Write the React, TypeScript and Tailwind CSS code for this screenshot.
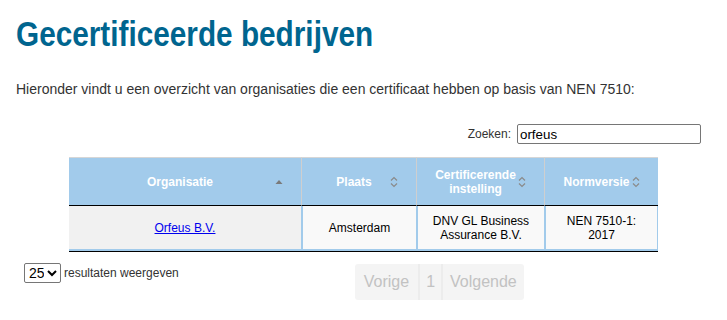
import React from 'react';

const SortBoth = () => (
  <svg width="8" height="12" viewBox="0 0 8 12">
    <path d="M1 4.5 L4 1.5 L7 4.5" fill="none" stroke="#8a8a8a" strokeWidth="1.2" />
    <path d="M1 7.5 L4 10.5 L7 7.5" fill="none" stroke="#8a8a8a" strokeWidth="1.2" />
  </svg>
);

const SortAsc = () => (
  <svg width="8" height="12" viewBox="0 0 8 12">
    <path d="M0.5 8 L4 4 L7.5 8 Z" fill="#7a7a7a" />
  </svg>
);

const columns = [
  { label: 'Organisatie', w: 'w-[232px]', sorted: true },
  { label: 'Plaats', w: 'w-[115px]', sorted: false },
  { label: 'Certificerende instelling', w: 'w-[128px]', sorted: false },
  { label: 'Normversie', w: 'w-[114px]', sorted: false },
];

export default function App() {
  return (
    <div className="min-h-[320px] bg-white px-4 text-[#333] font-['Liberation_Sans',Arial,sans-serif]">
      {/* titel */}
      <h1 className="pt-[14px] text-[35px] leading-[40px] font-bold text-[#00658f]">
        <span className="inline-block origin-left scale-x-[0.85] whitespace-nowrap">Gecertificeerde bedrijven</span>
      </h1>

      <p className="mt-[26px] text-[14px] leading-[18px]">
        Hieronder vindt u een overzicht van organisaties die een certificaat hebben op basis van NEN 7510:
      </p>

      {/* zoekveld */}
      <div className="mt-[26px] flex items-center justify-end gap-[6px] pr-[10px]">
        <label className="text-[12px]">Zoeken:</label>
        <input
          readOnly
          value="orfeus"
          className="h-[20px] w-[184px] rounded-[2px] border border-[#767676] px-[2px] text-[13.33px] text-black outline-none"
        />
      </div>

      {/* tabel */}
      <table className="mx-auto mt-[13px] w-[589px] table-fixed border-separate border-spacing-0 text-[12px]">
        <thead>
          <tr>
            {columns.map((c, i) => (
              <th
                key={c.label}
                className={`${c.w} relative h-[49px] border-t border-b border-t-[#d6d6d6] border-b-black bg-[#a2cbeb] pl-2 pr-[18px] text-center font-bold leading-[14px] text-white ${
                  i > 0 ? 'border-l border-l-[#cfcfcf]' : ''
                }`}
              >
                {c.label}
                <span className="absolute right-[18px] top-1/2 flex -translate-y-1/2">
                  {c.sorted ? <SortAsc /> : <SortBoth />}
                </span>
              </th>
            ))}
          </tr>
        </thead>
        <tbody>
          <tr className="text-center leading-[14px]">
            <td className="h-[45px] border-b-2 border-b-[#a2cbeb] bg-[#f1f1f1] px-2">
              <a href="#" className="text-[#0000ee] underline">
                Orfeus B.V.
              </a>
            </td>
            <td className="border-b-2 border-l-2 border-b-[#a2cbeb] border-l-[#a2cbeb] bg-[#f9f9f9] px-2 text-black">
              Amsterdam
            </td>
            <td className="border-b-2 border-l-2 border-b-[#a2cbeb] border-l-[#a2cbeb] bg-[#f9f9f9] px-2 text-black">
              DNV GL Business Assurance B.V.
            </td>
            <td className="border-b-2 border-l-2 border-r border-b-[#a2cbeb] border-l-[#a2cbeb] border-r-[#a2cbeb] bg-[#f9f9f9] px-2 text-black">
              NEN 7510-1: 2017
            </td>
          </tr>
          <tr>
            <td colSpan={4} className="h-px bg-black p-0" />
          </tr>
        </tbody>
      </table>

      {/* onderbalk */}
      <div className="mt-[11px] flex items-start">
        <div className="ml-2 flex items-center gap-[3px]">
          <select
            defaultValue="25"
            className="h-[20px] w-[37px] rounded-[2px] border border-[#767676] bg-white text-[14px] text-black"
          >
            <option value="10">10</option>
            <option value="25">25</option>
            <option value="50">50</option>
          </select>
          <span className="text-[12px]">resultaten weergeven</span>
        </div>
        <div className="ml-[176px] mt-px flex h-[36px] items-stretch overflow-hidden rounded-[3px] bg-[#f4f4f4] text-[16px] text-[#c2c2c2]">
          <span className="flex items-center px-[9px]">Vorige</span>
          <span className="flex items-center border-x-2 border-[#ececec] px-[6px]">1</span>
          <span className="flex items-center px-[7px]">Volgende</span>
        </div>
      </div>
    </div>
  );
}
